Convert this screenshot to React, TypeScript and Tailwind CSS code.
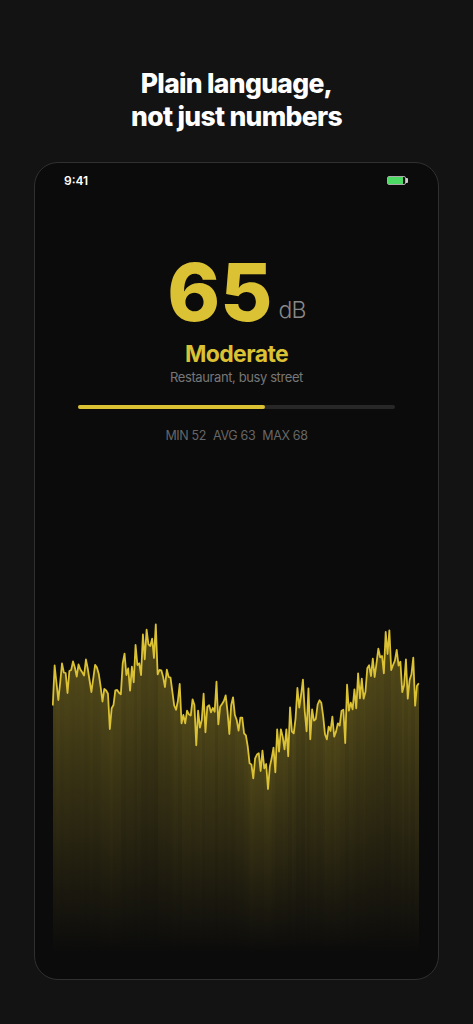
const LEVELS = [
  705.5, 665.5, 683, 700, 683, 663.5, 672.5, 673, 693, 671,
  670, 661.5, 667.5, 676.5, 664.5, 669.5, 672.3, 675.5, 659.5, 668.5,
  680.5, 692, 678.5, 664.8, 667.5, 674, 686.5, 701.5, 689, 690.5,
  693.7, 729, 708.3, 705, 690.3, 690, 692.8, 694.3, 663.5, 653.6,
  675, 668.4, 690.6, 666.7, 682.3, 645, 665, 663.3, 675, 634.5,
  659.3, 629.7, 644.3, 646, 638.6, 658, 624.4, 674.3, 670, 670.3,
  677, 687, 669.7, 677, 677.7, 691.6, 705.5, 709.7, 701, 684,
  723.3, 715, 723.3, 710.7, 714.3, 715.6, 699.3, 705, 745.3, 710.6,
  727.6, 720, 693.7, 732.3, 706.7, 705.3, 712.3, 708, 711.7, 681.7,
  724.3, 706.7, 704, 701, 695.3, 711.7, 734, 705, 697.3, 715,
  720, 730.6, 717.6, 717.6, 733.3, 735.3, 746.7, 763.3, 764.4, 778.3,
  758.3, 754.6, 753.3, 771, 750.7, 768.3, 764, 789, 766.6, 758.3,
  747.6, 772.3, 729.3, 751.7, 729.3, 736.6, 749.3, 729.3, 756.3, 707.3,
  731.6, 733.3, 718.3, 688, 707.6, 695, 679.6, 711.6, 731.3, 688.3,
  739.3, 709.3, 720.6, 719, 704.5, 700.3, 702.8, 716, 734.3, 739.3,
  726.7, 731, 716.6, 736.6, 731.6, 723.3, 725.6, 710.7, 709.7, 743,
  684.7, 710.6, 702.7, 709.3, 689.3, 708.3, 673.3, 698.3, 678.7, 698.7,
  691.7, 668.3, 665.3, 676, 658.7, 677, 663.3, 648.7, 657.3, 656,
  673.3, 632, 654, 630.3, 670, 665, 660.7, 650, 665.7, 661.7,
  692, 685, 659.3, 698.7, 680, 674.3, 657.7, 705.7, 685.7, 683.3,
]

const LEFT = 52.8
const STEP = 366 / (LEVELS.length - 1)
const BASE = 953

function LevelChart() {
  const points = LEVELS.map((y, i) => [LEFT + i * STEP, y])
  const line = points.map(([x, y]) => `${x.toFixed(2)},${y}`).join(" ")

  return (
    <svg width="369" height="341" viewBox="52 612 369 341" className="block shrink-0">
      <defs>
        <linearGradient id="fade" x1="0" y1="0" x2="0" y2="1">
          <stop offset="0" stopColor="#dbc134" stopOpacity="0.34" />
          <stop offset="1" stopColor="#dbc134" stopOpacity="0" />
        </linearGradient>
      </defs>
      {/* every slice fades on its own, from the line down to the base */}
      <g shapeRendering="crispEdges">
        {points.slice(1).map(([x, y], i) => {
          const [px, py] = points[i]
          return (
            <polygon
              key={i}
              points={`${px},${py} ${x},${y} ${x},${BASE} ${px},${BASE}`}
              fill="url(#fade)"
            />
          )
        })}
      </g>
      <polyline points={line} fill="none" stroke="#dbc134" strokeWidth="1.8" strokeLinejoin="round" />
    </svg>
  )
}

function Battery() {
  return (
    <div className="mb-[2px] flex items-center">
      <div className="h-[9px] w-[19px] rounded-[2px] border border-[#aaa]">
        <div className="h-full w-[15px] bg-[#4cd964]" />
      </div>
      <div className="h-[5px] w-[2px] rounded-r-[1px] bg-[#ccc]" />
    </div>
  )
}

export default function App() {
  return (
    <main className="flex h-[1024px] w-[473px] flex-col items-center overflow-hidden bg-[#131313] pt-[67px] font-['Inter',sans-serif]">
      <h1 className="text-center text-[26.5px] leading-[33px] font-extrabold tracking-[-0.7px] text-white">
        Plain language,
        <br />
        not just numbers
      </h1>

      <section className="mt-[29px] flex h-[818px] w-[405px] shrink-0 flex-col items-center rounded-[24px] border border-[#303030] bg-[#0b0b0b]">
        {/* Status bar */}
        <div className="flex h-9 w-full items-center justify-between pr-[30px] pl-[29px]">
          <span className="text-[12px] font-semibold text-white">9:41</span>
          <Battery />
        </div>

        {/* Reading */}
        <div className="mt-[59px] flex h-[68px] items-end whitespace-nowrap">
          <span className="text-[80px] leading-[68px] font-extrabold tracking-[0px] text-[#dbc134]">65</span>
          <span className="mb-[2px] ml-[6px] text-[23px] leading-7 font-light tracking-[-0.8px] text-[#888]">dB</span>
        </div>
        <p className="mt-[14px] text-[23px] leading-7 font-bold tracking-[-0.6px] text-[#dbc134]">Moderate</p>
        <p className="mt-px text-[13px] leading-4 tracking-[-0.4px] text-[#777]">Restaurant, busy street</p>

        <div className="mt-5 h-1 w-[317px] rounded-full bg-[#272727]">
          <div className="h-full w-[187px] rounded-full bg-[#dbc134]" />
        </div>

        <div className="mt-[19px] flex gap-[7px] text-[12.5px] leading-4 tracking-[-0.35px] text-[#666]">
          <span>MIN 52</span>
          <span>AVG 63</span>
          <span>MAX 68</span>
        </div>

        <div className="mt-[168px]">
          <LevelChart />
        </div>
      </section>
    </main>
  )
}
